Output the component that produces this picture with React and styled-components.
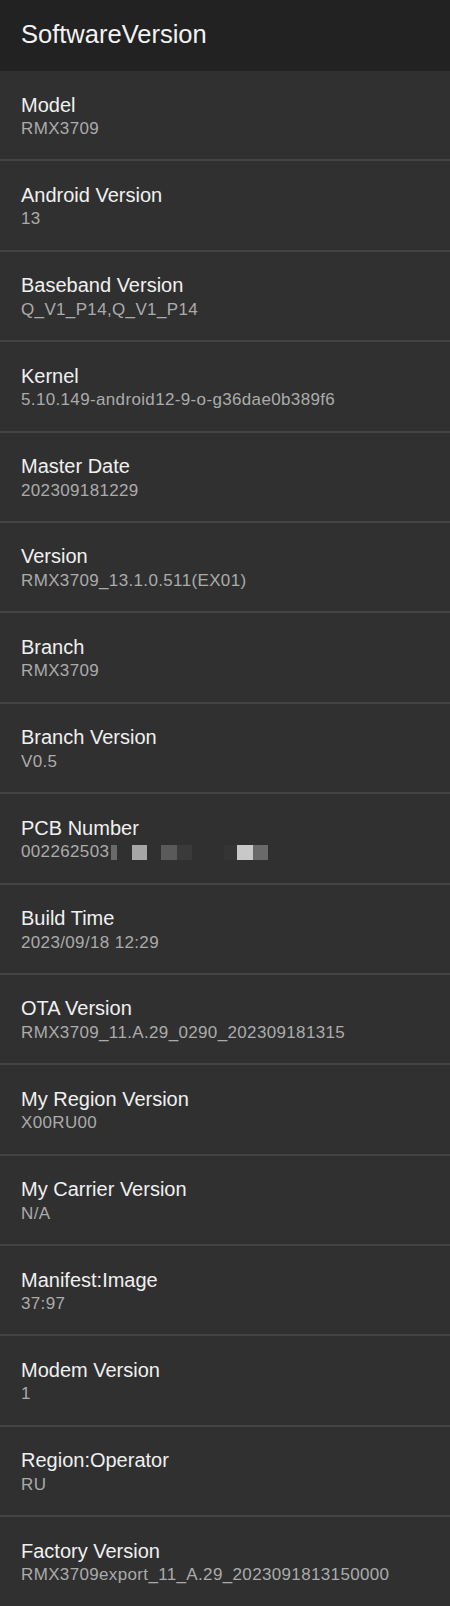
import styled, { createGlobalStyle } from "styled-components";

const GlobalStyle = createGlobalStyle`
  body {
    margin: 0;
    background-color: #303030;
    font-family: "Liberation Sans", Arial, sans-serif;
  }
`;

const Page = styled.div`
  width: 450px;
  height: 1606px;
  overflow: hidden;
  background-color: #303030;
`;

const Header = styled.header`
  height: 71px;
  display: flex;
  align-items: center;
  padding: 0 21px;
  box-sizing: border-box;
  background-color: #222222;
`;

const Title = styled.h1`
  margin: 0 0 2px;
  font-size: 25.5px;
  font-weight: normal;
  color: #f2f2f2;
`;

const List = styled.ul`
  list-style: none;
  margin: 0;
  padding: 0;
`;

const Row = styled.li`
  height: 90.4px;
  box-sizing: border-box;
  padding: 21.5px 21px 0;
  border-bottom: 2px solid #444444;
  display: flex;
  flex-direction: column;
`;

const Label = styled.div`
  font-size: 20px;
  line-height: 24px;
  color: #f0f0f0;
`;

const Value = styled.div`
  margin-top: 2.5px;
  font-size: 17px;
  line-height: 20px;
  letter-spacing: 0.35px;
  color: #ababab;
  display: flex;
  align-items: center;
`;

const Blur = styled.span`
  display: inline-block;
  width: ${({ w }) => w}px;
  height: 15px;
  margin-left: ${({ gap }) => gap || 0}px;
  background-color: ${({ c }) => c};
`;

const rows = [
  ["Model", "RMX3709"],
  ["Android Version", "13"],
  ["Baseband Version", "Q_V1_P14,Q_V1_P14"],
  ["Kernel", "5.10.149-android12-9-o-g36dae0b389f6"],
  ["Master Date", "202309181229"],
  ["Version", "RMX3709_13.1.0.511(EX01)"],
  ["Branch", "RMX3709"],
  ["Branch Version", "V0.5"],
  ["PCB Number", "pcb"],
  ["Build Time", "2023/09/18 12:29"],
  ["OTA Version", "RMX3709_11.A.29_0290_202309181315"],
  ["My Region Version", "X00RU00"],
  ["My Carrier Version", "N/A"],
  ["Manifest:Image", "37:97"],
  ["Modem Version", "1"],
  ["Region:Operator", "RU"],
  ["Factory Version", "RMX3709export_11_A.29_2023091813150000"],
];

const pcbBlocks = [
  { w: 6, c: "#6a6a6a", gap: 2 },
  { w: 15, c: "#a6a6a6", gap: 15 },
  { w: 16, c: "#5a5a5a", gap: 14 },
  { w: 15, c: "#3a3a3a" },
  { w: 13, c: "#343434", gap: 32 },
  { w: 16, c: "#c8c8c8" },
  { w: 15, c: "#6a6a6a" },
];

function PcbValue() {
  return (
    <Value>
      002262503
      {pcbBlocks.map((b, i) => (
        <Blur key={i} w={b.w} c={b.c} gap={b.gap} />
      ))}
    </Value>
  );
}

export default function App() {
  return (
    <Page>
      <GlobalStyle />
      <Header>
        <Title>SoftwareVersion</Title>
      </Header>
      <List>
        {rows.map(([label, value]) => (
          <Row key={label}>
            <Label>{label}</Label>
            {value === "pcb" ? <PcbValue /> : <Value>{value}</Value>}
          </Row>
        ))}
      </List>
    </Page>
  );
}
